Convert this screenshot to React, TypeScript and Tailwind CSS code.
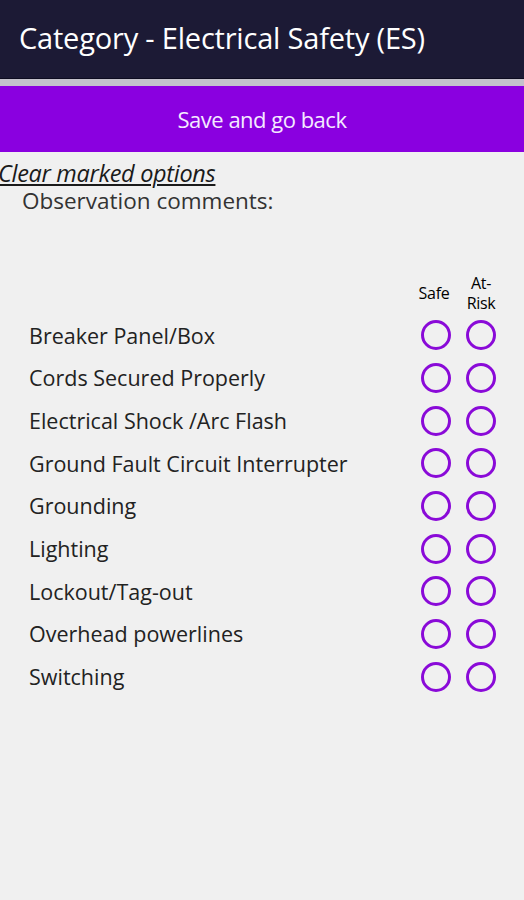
import React from "react";

const items = [
  "Breaker Panel/Box",
  "Cords Secured Properly",
  "Electrical Shock /Arc Flash",
  "Ground Fault Circuit Interrupter",
  "Grounding",
  "Lighting",
  "Lockout/Tag-out",
  "Overhead powerlines",
  "Switching",
];

function Radio() {
  return <div className="w-[30px] h-[30px] rounded-full border-[3px] border-[#8a0ad8]" />;
}

export default function App() {
  return (
    <div className="w-[524px] h-[900px] bg-[#f0f0f0] overflow-hidden" style={{ fontFamily: '"Open Sans", sans-serif' }}>
      <div className="h-[79px] bg-[#1c1a35] flex items-center pl-[19px] pb-[3px] border-b border-[#0d0c20]">
        <span className="text-white text-[29px] leading-none tracking-[-0.2px]">Category - Electrical Safety (ES)</span>
      </div>
      <div className="h-[7px] bg-[#c4c2cc]" />
      <div className="h-[66px] bg-[#8a00e0] flex items-center justify-center">
        <span className="text-[#f4eaff] text-[22px] tracking-[-0.5px]">Save and go back</span>
      </div>
      <div className="mt-[7px] flex">
        <span className="-ml-[2px] italic underline text-[23.5px] text-[#1a1a1a] leading-[28px] tracking-[-0.3px]">Clear marked options</span>
      </div>
      <div className="pl-[22px] text-[22.5px] text-[#333] leading-[28px]">Observation comments:</div>
      <div className="flex justify-end pr-[28px] mt-[58px] gap-[15px] items-center">
        <div className="w-[34px] flex justify-center text-[16px] leading-[20px] font-medium text-black tracking-[-0.3px]">Safe</div>
        <div className="w-[30px] flex flex-col items-center text-[16px] leading-[20px] font-medium text-black tracking-[-0.3px]">
          <span>At-</span>
          <span>Risk</span>
        </div>
      </div>
      <div className="flex flex-col mt-[1px]">
        {items.map((it) => (
          <div key={it} className="h-[42.7px] flex items-center pl-[29px] pr-[28px]">
            <span className="flex-1 text-[21.5px] text-[#222] leading-none">{it}</span>
            <div className="flex gap-[15px]">
              <Radio />
              <Radio />
            </div>
          </div>
        ))}
      </div>
    </div>
  );
}
